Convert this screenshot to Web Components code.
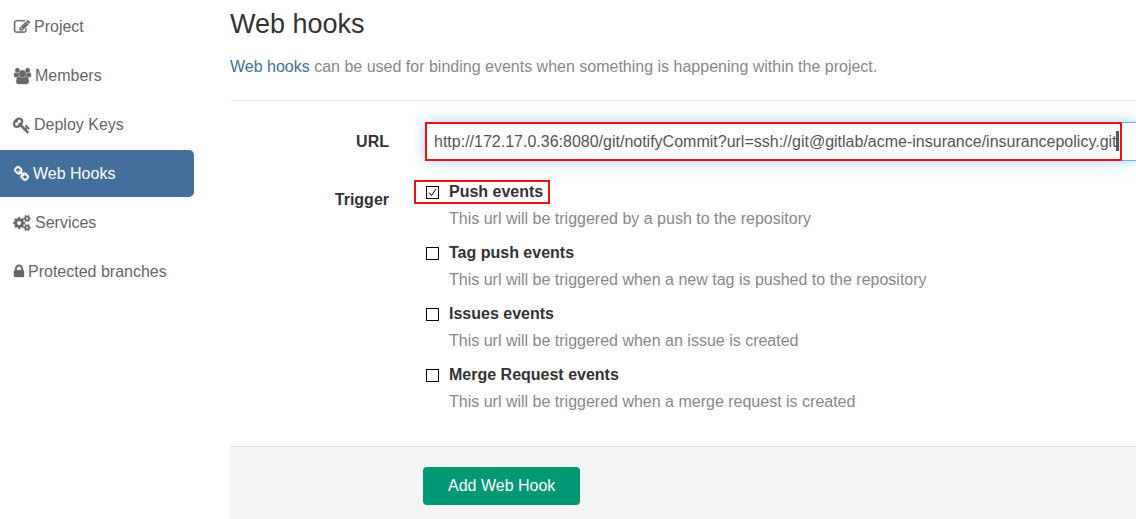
<!DOCTYPE html>
<html lang="en">
<head>
<meta charset="utf-8">
<meta name="viewport" content="width=device-width, initial-scale=1">
<title>Web hooks</title>
<style>
  html, body { height: 100%; }
  body { margin: 0; background: #fff; color: #333; font: 16px/24px "Liberation Sans", Helvetica, Arial, sans-serif; }
</style>
</head>
<body>
<settings-page>
  <settings-nav slot="nav">
    <nav-item icon="edit" href="#project">Project</nav-item>
    <nav-item icon="users" href="#members">Members</nav-item>
    <nav-item icon="key" href="#keys">Deploy Keys</nav-item>
    <nav-item icon="link" href="#hooks" active>Web Hooks</nav-item>
    <nav-item icon="cogs" href="#services">Services</nav-item>
    <nav-item icon="lock" href="#branches">Protected branches</nav-item>
  </settings-nav>
  <page-intro slot="intro"></page-intro>
  <hook-form></hook-form>
</settings-page>

<script>
const attach = (host, markup) => {
  const t = document.createElement('template');
  t.innerHTML = markup;
  host.attachShadow({ mode: 'open' }).append(t.content.cloneNode(true));
};

// Each entry: viewBox, width in px, path data
const ICONS = {
  edit: ['0 0 1792 1792', 16, 'M888 1184l116-116-152-152-116 116v56h96v96h56zm440-720q-16-16-33 1l-350 350q-17 17-1 33t33-1l350-350q17-17 1-33zm80 594v190q0 119-84.5 203.5t-203.5 84.5h-832q-119 0-203.5-84.5t-84.5-203.5v-832q0-119 84.5-203.5t203.5-84.5h832q63 0 117 25 15 7 18 23 3 17-9 29l-49 49q-14 14-32 8-23-6-45-6h-832q-66 0-113 47t-47 113v832q0 66 47 113t113 47h832q66 0 113-47t47-113v-126q0-13 9-22l64-64q15-15 35-7t20 29zm-96-738l288 288-672 672h-288v-288zm444 132l-92 92-288-288 92-92q28-28 68-28t68 28l152 152q28 28 28 68t-28 68z'],
  users: ['0 0 1920 1792', 17, 'M593 896q-162 5-265 128h-134q-82 0-138-40.5t-56-118.5q0-353 124-353 6 0 43.5 21t97.5 42.5 119 21.5q67 0 133-23-5 37-5 66 0 139 81 256zm1071 637q0 120-73 189.5t-194 69.5h-874q-121 0-194-69.5t-73-189.5q0-53 3.5-103.5t14-109 26.5-108.5 43-97.5 62-81 85.5-53.5 111.5-20q10 0 43 21.5t73 48 107 48 135 21.5 135-21.5 107-48 73-48 43-21.5q61 0 111.5 20t85.5 53.5 62 81 43 97.5 26.5 108.5 14 109 3.5 103.5zm-1024-1277q0 106-75 181t-181 75-181-75-75-181 75-181 181-75 181 75 75 181zm704 384q0 159-112.5 271.5t-271.5 112.5-271.5-112.5-112.5-271.5 112.5-271.5 271.5-112.5 271.5 112.5 112.5 271.5zm576 225q0 78-56 118.5t-138 40.5h-134q-103-123-265-128 81-117 81-256 0-29-5-66 66 23 133 23 59 0 119-21.5t97.5-42.5 43.5-21q124 0 124 353zm-128-609q0 106-75 181t-181 75-181-75-75-181 75-181 181-75 181 75 75 181z'],
  key: ['96 64 1632 1632', 16, 'M832 512q0-80-56-136t-136-56-136 56-56 136q0 42 19 83-41-19-83-19-80 0-136 56t-56 136 56 136 136 56 136-56 56-136q0-42-19-83 41 19 83 19 80 0 136-56t56-136zm851 704q0 17-49 66t-66 49q-9 0-28.5-16t-36.5-33-38.5-40-24.5-26l-96 96 220 220q28 28 28 68 0 42-39 81t-81 39q-40 0-68-28l-671-671q-176 131-365 131-163 0-265.5-102.5t-102.5-265.5q0-160 95-313t248-248 313-95q163 0 265.5 102.5t102.5 265.5q0 189-131 365l355 355 96-96q-3-3-26-24.5t-40-38.5-33-36.5-16-28.5q0-17 49-66t66-49q13 0 23 10 6 6 46 44.5t82 79.5 86.5 86 73 78 28.5 41z'],
  link: ['64 64 1664 1664', 15, 'M1520 1216q0-40-28-68l-208-208q-28-28-68-28-42 0-72 32 3 3 19 18.5t21.5 21.5 15 19 13 25.5 3.5 27.5q0 40-28 68t-68 28q-15 0-27.5-3.5t-25.5-13-19-15-21.5-21.5-18.5-19q-33 31-33 73 0 40 28 68l206 207q27 27 68 27 40 0 68-26l147-146q28-28 28-67zm-703-705q0-40-28-68l-206-207q-28-28-68-28-39 0-68 27l-147 146q-28 28-28 67 0 40 28 68l208 208q27 27 68 27 42 0 72-31-3-3-19-18.5t-21.5-21.5-15-19-13-25.5-3.5-27.5q0-40 28-68t68-28q15 0 27.5 3.5t25.5 13 19 15 21.5 21.5 18.5 19q33-31 33-73zm895 705q0 120-85 203l-147 146q-83 83-203 83-121 0-204-85l-206-207q-83-83-83-203 0-123 88-209l-88-88q-86 88-208 88-120 0-204-84l-208-208q-84-84-84-204t85-203l147-146q83-83 203-83 121 0 204 85l206 207q83 83 83 203 0 123-88 209l88 88q86-88 208-88 120 0 204 84l208 208q84 84 84 204z'],
  cogs: ['0 0 1920 1792', 17, 'M832 896q0-106-75-181t-181-75-181 75-75 181 75 181 181 75 181-75 75-181zm768 512q0-52-38-90t-90-38-90 38-38 90q0 53 37.5 90.5t90.5 37.5 90.5-37.5 37.5-90.5zm0-1024q0-52-38-90t-90-38-90 38-38 90q0 53 37.5 90.5t90.5 37.5 90.5-37.5 37.5-90.5zm-384 421v185q0 10-7 19.5t-16 10.5l-155 24q-11 35-32 76 34 48 90 115 7 11 7 20 0 12-7 19-23 30-82.5 89.5t-78.5 59.5q-11 0-21-7l-115-90q-37 19-77 31-11 108-23 155-7 24-30 24h-186q-11 0-20-7.5t-10-17.5l-23-153q-34-10-75-31l-118 89q-7 7-20 7-11 0-21-8-144-133-144-160 0-9 7-19 10-14 41-53t47-61q-23-44-35-82l-152-24q-10-1-17-9.5t-7-19.5v-185q0-10 7-19.5t16-10.5l155-24q11-35 32-76-34-48-90-115-7-11-7-20 0-12 7-20 22-30 82-89t79-59q11 0 21 7l115 90q34-18 77-32 11-108 23-154 7-24 30-24h186q11 0 20 7.5t10 17.5l23 153q34 10 75 31l118-89q8-7 20-7 11 0 21 8 144 133 144 160 0 8-7 19-12 16-42 54t-45 60q23 48 34 82l152 23q10 2 17 10.5t7 19.5zm640 533v140q0 16-149 31-12 27-30 52 51 113 51 138 0 4-4 7-122 71-124 71-8 0-46-47t-52-68q-20 2-30 2t-30-2q-14 21-52 68t-46 47q-2 0-124-71-4-3-4-7 0-25 51-138-18-25-30-52-149-15-149-31v-140q0-16 149-31 13-29 30-52-51-113-51-138 0-4 4-7 4-2 35-20t59-34 30-16q8 0 46 46.5t52 67.5q20-2 30-2t30 2q51-71 92-112l6-2q4 0 124 70 4 3 4 7 0 25-51 138 17 23 30 52 149 15 149 31zm0-1024v140q0 16-149 31-12 27-30 52 51 113 51 138 0 4-4 7-122 71-124 71-8 0-46-47t-52-68q-20 2-30 2t-30-2q-14 21-52 68t-46 47q-2 0-124-71-4-3-4-7 0-25 51-138-18-25-30-52-149-15-149-31v-140q0-16 149-31 13-29 30-52-51-113-51-138 0-4 4-7 4-2 35-20t59-34 30-16q8 0 46 46.5t52 67.5q20-2 30-2t30 2q51-71 92-112l6-2q4 0 124 70 4 3 4 7 0 25-51 138 17 23 30 52 149 15 149 31z'],
  lock: ['320 128 1152 1664', 10, 'M640 768h512v-192q0-106-75-181t-181-75-181 75-75 181v192zm832 96v576q0 40-28 68t-68 28h-960q-40 0-68-28t-28-68v-576q0-40 28-68t68-28h32v-192q0-184 132-316t316-132 316 132 132 316v192h32q40 0 68 28t28 68z']
};

customElements.define('settings-page', class extends HTMLElement {
  constructor() {
    super();
    attach(this, `
      <style>
        :host { display: flex; gap: 36px; min-height: 100%; overflow: hidden; }
        aside { flex: 0 0 194px; }
        main { flex: 1; min-width: 0; display: flex; flex-direction: column; }
        ::slotted(hook-form) { flex: 1; }
      </style>
      <aside><slot name="nav"></slot></aside>
      <main><slot name="intro"></slot><slot></slot></main>`);
  }
});

customElements.define('settings-nav', class extends HTMLElement {
  constructor() {
    super();
    attach(this, `
      <style>
        :host { display: block; padding-top: 3px; }
        nav { display: flex; flex-direction: column; gap: 2px; }
      </style>
      <nav aria-label="Project settings"><slot></slot></nav>`);
  }
});

customElements.define('nav-item', class extends HTMLElement {
  connectedCallback() {
    if (this.shadowRoot) return;
    const [box, width, d] = ICONS[this.getAttribute('icon')];
    attach(this, `
      <style>
        :host { display: block; color: #666; }
        :host([active]) { color: #fff; background: #446e9b; border-radius: 0 5px 5px 0; }
        a { display: flex; align-items: center; gap: 4px; height: 47px; padding: 0 14px; color: inherit; text-decoration: none; white-space: nowrap; }
        svg { flex: none; height: 16px; overflow: visible; fill: currentColor; stroke: currentColor; stroke-width: 44; }
      </style>
      <a href="${this.getAttribute('href')}"><svg viewBox="${box}" width="${width}" aria-hidden="true"><path d="${d}"/></svg><span><slot></slot></span></a>`);
  }
});

customElements.define('page-intro', class extends HTMLElement {
  constructor() {
    super();
    attach(this, `
      <style>
        :host { display: block; padding: 8px 0 21px; border-bottom: 1px solid #eee; }
        h3 { margin: 0 0 15px; font-size: 27px; line-height: 32px; font-weight: 400; color: #333; }
        p { margin: 0; color: #888; }
        a { color: #446e9b; text-decoration: none; }
      </style>
      <h3>Web hooks</h3>
      <p><a href="#help">Web hooks</a> can be used for binding events when something is happening within the project.</p>`);
  }
});

customElements.define('url-field', class extends HTMLElement {
  constructor() {
    super();
    attach(this, `
      <style>
        :host { display: grid; grid-template-columns: 159px 1fr; column-gap: 36px; align-items: center; }
        label { text-align: right; font-weight: 700; }
        .box { position: relative; min-width: 0; }
        input { display: block; box-sizing: border-box; width: 100%; height: 39px; padding: 0 8px; font: inherit; color: #555;
          background: #fff; border: 1px solid #66afe9; border-right: 0; border-radius: 0; outline: 0; box-shadow: 0 0 12px rgba(102,175,233,.6); }
        .mark { position: absolute; inset: 0 auto 0 0; box-sizing: border-box; width: 697px; border: 2px solid #f01010; pointer-events: none; }
        .caret { position: absolute; top: 7px; right: 1px; width: 3px; height: 20px; background: #555; }
      </style>
      <label for="url">URL</label>
      <div class="box">
        <input id="url" type="text" value="http://172.17.0.36:8080/git/notifyCommit?url=ssh://git@gitlab/acme-insurance/insurancepolicy.git">
        <div class="mark"><div class="caret"></div></div>
      </div>`);
  }
});

customElements.define('trigger-option', class extends HTMLElement {
  constructor() {
    super();
    attach(this, `
      <style>
        :host { display: block; }
        .row { position: relative; display: flex; align-items: center; gap: 10px; width: max-content; padding-left: 1px; }
        input { appearance: none; flex: none; box-sizing: border-box; width: 13px; height: 13px; margin: 0; border: 1px solid #000; background: #fff; }
        input:checked { background: url("data:image/svg+xml,%3Csvg xmlns='http://www.w3.org/2000/svg' viewBox='0 0 11 11'%3E%3Cpath d='M2 5.5l2.5 3L9 2' fill='none' stroke='%23000' stroke-width='1'/%3E%3C/svg%3E") center / 11px 11px no-repeat; }
        label { font-weight: 700; color: #333; }
        p { margin: 3px 0 0 24px; color: #888; }
        :host([marked]) .row::after { content: ""; position: absolute; inset: 0 -7px 0 -11px; border: 2px solid #f01010; box-sizing: border-box; pointer-events: none; }
      </style>
      <div class="row"><input id="tick" type="checkbox"><label for="tick"><slot></slot></label></div>
      <p><slot name="help"></slot></p>`);
    this.shadowRoot.querySelector('input').checked = this.hasAttribute('checked');
  }
});

customElements.define('hook-form', class extends HTMLElement {
  constructor() {
    super();
    attach(this, `
      <style>
        :host { display: flex; }
        form { flex: 1; min-width: 0; display: flex; flex-direction: column; padding-top: 21px; }
        .triggers { display: grid; grid-template-columns: 159px 1fr; column-gap: 36px; margin: 19px 0 32px; }
        .name { text-align: right; font-weight: 700; padding-top: 8px; }
        .options { display: flex; flex-direction: column; gap: 10px; }
        footer { flex: 1; padding: 20px 0 14px 193px; background: #f5f5f5; border-top: 1px solid #e5e5e5; }
        button { height: 38px; padding: 0 25px; font: inherit; color: #fff; background: #019875; border: 0; border-radius: 4px; cursor: pointer; }
      </style>
      <form>
        <url-field></url-field>
        <div class="triggers" role="group" aria-labelledby="trigger">
          <div class="name" id="trigger">Trigger</div>
          <div class="options">
            <trigger-option checked marked>Push events<span slot="help">This url will be triggered by a push to the repository</span></trigger-option>
            <trigger-option>Tag push events<span slot="help">This url will be triggered when a new tag is pushed to the repository</span></trigger-option>
            <trigger-option>Issues events<span slot="help">This url will be triggered when an issue is created</span></trigger-option>
            <trigger-option>Merge Request events<span slot="help">This url will be triggered when a merge request is created</span></trigger-option>
          </div>
        </div>
        <footer><button type="button">Add Web Hook</button></footer>
      </form>`);
  }
});
</script>
</body>
</html>
